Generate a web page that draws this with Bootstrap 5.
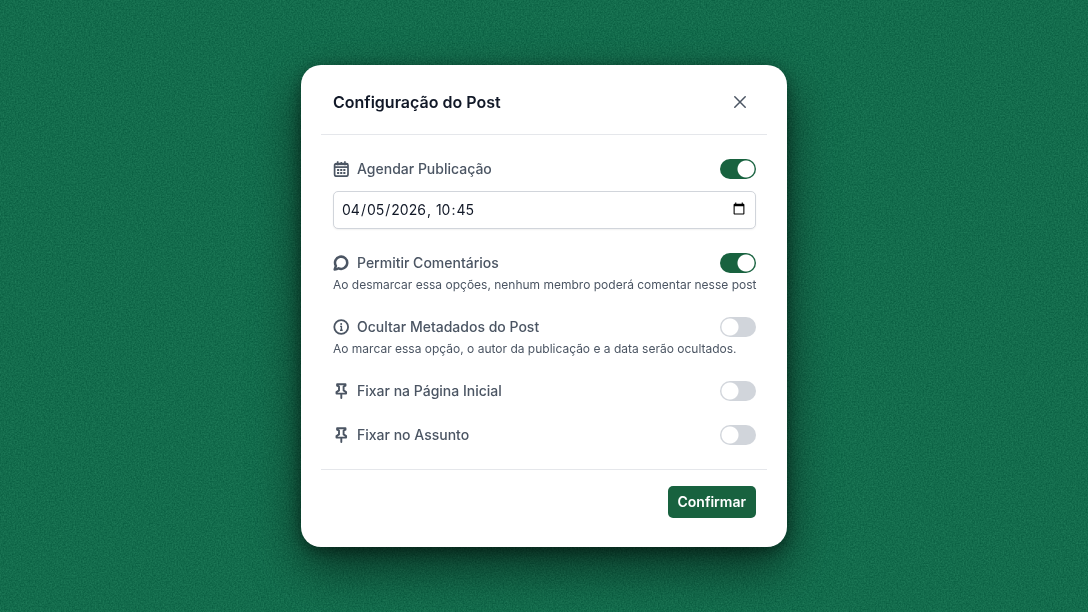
<!DOCTYPE html>
<html lang="pt-BR">
<head>
<meta charset="utf-8">
<meta name="viewport" content="width=device-width, initial-scale=1">
<title>Configuração do Post</title>
<link href="https://cdn.jsdelivr.net/npm/bootstrap@5.3.0/dist/css/bootstrap.min.css" rel="stylesheet">
<style>
  :root { --brand: #18623f; --ink: #4b5563; }
  body { font-family: Inter, "Noto Sans", sans-serif; background: #136c4c; color: var(--ink); }
  .grain { position: fixed; inset: 0; z-index: -1; pointer-events: none; }
  .post-dialog { width: 100%; max-width: 486px; padding: 20px 20px 29px; border-radius: 20px; background: #fff;
    box-shadow: 0 20px 48px rgba(0,0,0,.55), 0 4px 16px rgba(0,0,0,.4); }
  .post-head { padding: 5px 11px 20px 12px; border-bottom: 1px solid #e5e7eb; }
  .post-head h1 { font-size: 16px; line-height: 24px; font-weight: 600; color: #111827; }
  .post-body { padding: 24px 11px 24px 12px; gap: 24px; }
  .post-foot { padding: 16px 11px 0 12px; border-top: 1px solid #e5e7eb; }
  .close-x { width: 32px; height: 24px; color: var(--ink); }
  .option-label { font-size: 14px; line-height: 20px; font-weight: 500; }
  .option-note { font-size: 12px; line-height: 16px; margin-top: 4px; white-space: nowrap; }
  .form-switch .form-check-input { width: 36px; height: 20px; border: 0; background-color: #d1d5db;
    background-image: radial-gradient(circle at center, #fff 8px, transparent 9px);
    background-size: 20px 20px; background-repeat: no-repeat; background-position: left center; }
  .form-switch .form-check-input:checked { background-color: var(--brand); background-position: right center; }
  .date-field { height: 38px; margin-top: 12px; padding: 0 7px 2px; border-color: #d1d5db; border-radius: 5px;
    font-size: 14px; color: #111827; box-shadow: 0 1px 2px rgba(0,0,0,.06); }
  .date-field::-webkit-datetime-edit-month-field,
  .date-field::-webkit-datetime-edit-day-field,
  .date-field::-webkit-datetime-edit-year-field,
  .date-field::-webkit-datetime-edit-hour-field,
  .date-field::-webkit-datetime-edit-minute-field { padding: 0 1px; }
  .date-field::-webkit-datetime-edit-ampm-field { display: none; }
  .btn-brand { --bs-btn-color: #fff; --bs-btn-bg: var(--brand); --bs-btn-hover-color: #fff; --bs-btn-hover-bg: #124d31;
    height: 32px; padding: 0 10px; border: 0; border-radius: 5px; font-size: 14px; line-height: 20px; font-weight: 600; }
  @media (max-width: 500px) { .option-note { white-space: normal; } }
</style>
</head>
<body>
<svg class="grain w-100 h-100" aria-hidden="true">
  <filter id="noise" x="0" y="0" width="100%" height="100%" color-interpolation-filters="sRGB">
    <feTurbulence type="fractalNoise" baseFrequency="0.65" numOctaves="2" seed="4"/>
    <feColorMatrix values="0.12 0 0 0 0.015  0.16 0 0 0 0.345  0.13 0 0 0 0.235  0 0 0 0 1"/>
  </filter>
  <rect width="100%" height="100%" filter="url(#noise)"/>
</svg>
<main class="min-vh-100 d-flex align-items-center justify-content-center">
  <section class="post-dialog" role="dialog" aria-labelledby="dialogTitle">
    <header class="post-head d-flex align-items-center justify-content-between">
      <h1 class="m-0" id="dialogTitle">Configuração do Post</h1>
      <button type="button" class="close-x btn border-0 p-0 d-flex align-items-center justify-content-center" aria-label="Fechar">
        <svg width="12" height="12" viewBox="0 0 12 12" fill="none" stroke="currentColor" stroke-width="1.5" stroke-linecap="round"><path d="M.8.8l10.4 10.4M11.2.8L.8 11.2"/></svg>
      </button>
    </header>

    <form id="postForm" class="post-body d-flex flex-column">
      <div>
        <div class="form-switch d-flex align-items-center justify-content-between p-0 m-0">
          <label class="option-label d-flex align-items-center gap-2" for="schedule">
            <svg width="16" height="16" viewBox="0 0 16 16" fill="none" stroke="currentColor" stroke-width="1.7"><rect x="1.6" y="2.6" width="13.4" height="12.6" rx="1.6"/><path d="M1.6 6.1h13.4" stroke-width="1.7"/><path d="M2 3.2h12.6" stroke-width="1.8"/><path d="M4.7.3v4M11.9.3v4M8.3.9v3.2" stroke-width="1.6"/><path d="M4.1 9h2.1M7.2 9h2.1M10.3 9h2.1M4.1 12h2.1M7.2 12h2.1M10.3 12h2.1" stroke-width="2"/></svg>
            Agendar Publicação
          </label>
          <input class="form-check-input float-none m-0" type="checkbox" role="switch" id="schedule" checked>
        </div>
        <input class="form-control date-field" type="datetime-local" value="2026-04-05T10:45" aria-label="Data da publicação">
      </div>

      <div>
        <div class="form-switch d-flex align-items-center justify-content-between p-0 m-0">
          <label class="option-label d-flex align-items-center gap-2" for="comments">
            <svg width="16" height="16" viewBox="0 0 16 16" fill="none" stroke="currentColor" stroke-width="2.5" stroke-linejoin="round"><path d="M1.7 14.4L2.9 10.9A6.1 6.1 0 1 1 5.6 13.3Q4 14.3 1.7 14.4Z"/></svg>
            Permitir Comentários
          </label>
          <input class="form-check-input float-none m-0" type="checkbox" role="switch" id="comments" checked>
        </div>
        <p class="option-note mb-0">Ao desmarcar essa opções, nenhum membro poderá comentar nesse post</p>
      </div>

      <div>
        <div class="form-switch d-flex align-items-center justify-content-between p-0 m-0">
          <label class="option-label d-flex align-items-center gap-2" for="metadata">
            <svg width="16" height="16" viewBox="0 0 16 16" fill="none" stroke="currentColor" stroke-width="1.8"><circle cx="8.2" cy="8" r="6.9"/><path d="M7.1 7.4h1.3v3.8M7 11.3h2.7" stroke-width="1.4"/><circle cx="8.2" cy="4.9" r="1" fill="currentColor" stroke="none"/></svg>
            Ocultar Metadados do Post
          </label>
          <input class="form-check-input float-none m-0" type="checkbox" role="switch" id="metadata">
        </div>
        <p class="option-note mb-0">Ao marcar essa opção, o autor da publicação e a data serão ocultados.</p>
      </div>

      <div class="form-switch d-flex align-items-center justify-content-between p-0 m-0">
        <label class="option-label d-flex align-items-center gap-2" for="pinHome">
          <svg width="16" height="16" viewBox="0 0 16 16" fill="none" stroke="currentColor" stroke-width="1.9" stroke-linejoin="round" stroke-linecap="round"><path d="M4.1 1.2h8.4v1.5l-1.9 1v3.7l2.5 1.7v1.5H3.5V9.1L6 7.4V3.7l-1.9-1ZM8.3 11v4"/></svg>
          Fixar na Página Inicial
        </label>
        <input class="form-check-input float-none m-0" type="checkbox" role="switch" id="pinHome">
      </div>

      <div class="form-switch d-flex align-items-center justify-content-between p-0 m-0">
        <label class="option-label d-flex align-items-center gap-2" for="pinSubject">
          <svg width="16" height="16" viewBox="0 0 16 16" fill="none" stroke="currentColor" stroke-width="1.9" stroke-linejoin="round" stroke-linecap="round"><path d="M4.1 1.2h8.4v1.5l-1.9 1v3.7l2.5 1.7v1.5H3.5V9.1L6 7.4V3.7l-1.9-1ZM8.3 11v4"/></svg>
          Fixar no Assunto
        </label>
        <input class="form-check-input float-none m-0" type="checkbox" role="switch" id="pinSubject">
      </div>
    </form>

    <footer class="post-foot d-flex justify-content-end">
      <button type="submit" form="postForm" class="btn btn-brand">Confirmar</button>
    </footer>
  </section>
</main>
<script src="https://cdn.jsdelivr.net/npm/bootstrap@5.3.0/dist/js/bootstrap.bundle.min.js"></script>
</body>
</html>
